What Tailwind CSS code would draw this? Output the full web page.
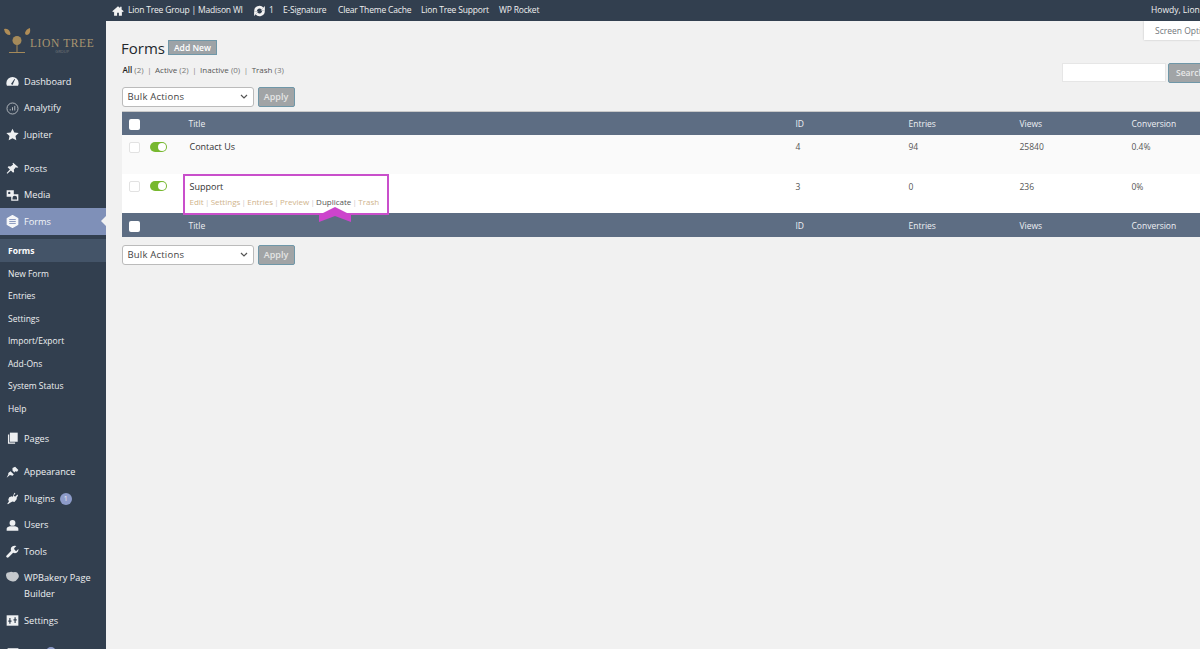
<!DOCTYPE html>
<html><head><meta charset="utf-8">
<script src="https://cdn.jsdelivr.net/npm/@tailwindcss/browser@4"></script>
</head>
<body class="m-0 overflow-hidden">
<div class="w-[1200px] h-[649px] overflow-hidden flex flex-col bg-[#f1f1f1] font-['Open_Sans',sans-serif] text-[#444]">
  <!-- top bar -->
  <header class="h-[21px] shrink-0 bg-[#323f4f] text-[#f0f0f0] text-[8.500px] tracking-[-0.180px] flex items-center pl-[112px] whitespace-nowrap">
    <svg class="w-[12px] h-[12px] mr-[4px]" viewBox="0 0 20 20" fill="#f2f2f2"><path d="M10 2 0.500 10.500 2 12l1.500-1.300V18h5v-5h3v5h5v-7.300L18 12l1.500-1.500L16 7.400V3h-2.500v2.200z"/></svg>
    <span class="w-[125px]">Lion Tree Group | Madison WI</span>
    <svg class="w-[13px] h-[12px] mr-[3px]" viewBox="0 0 20 20" fill="none" stroke="#f2f2f2" stroke-width="4.500"><path d="M3.500 11a6.500 6.500 0 0 1 11.500-5"/><path d="M16.500 9a6.500 6.500 0 0 1-11.500 5"/><path d="M19 1.500V9h-7z" fill="#f2f2f2" stroke="none"/><path d="M1 18.500V11h7z" fill="#f2f2f2" stroke="none"/></svg>
    <span class="w-[14px]">1</span>
    <span class="w-[55px]">E-Signature</span>
    <span class="w-[83px]">Clear Theme Cache</span>
    <span class="w-[78px]">Lion Tree Support</span>
    <span>WP Rocket</span>
    <span class="ml-auto w-[49px] tracking-normal">Howdy, Lion</span>
  </header>
  <div class="flex flex-1 min-h-0">
    <!-- sidebar -->
    <aside class="w-[106px] shrink-0 bg-[#323f4f] text-[#eef0f2] text-[9.200px] overflow-hidden">
      <div class="h-[47px] pl-[2px] pt-[6px] flex items-start">
        <svg class="w-[30px] h-[30px] shrink-0" viewBox="0 0 30 30"><path d="M2 2q4-1 6 3 1 2 0 3-5 0-6-6zM28 1q1 6-3 7-2 0-2-2 1-4 5-5z" fill="#b08d57"/><circle cx="15" cy="13.500" r="4.500" fill="#a58a5a"/><path d="M14.500 15h1v10h-1zM7 25h16v1H7z" fill="#a58a5a"/></svg>
        <div class="ml-[-2px] mt-[11px] text-center">
          <div class="font-['Liberation_Serif',serif] text-[11.500px] leading-[11px] tracking-[0.600px] text-[#a99570]">LION TREE</div>
          <div class="text-[4px] leading-[5px] text-[#76797c]">GROUP</div>
        </div>
      </div>
      <nav>
        <a class="h-[27px] flex items-center pl-[6px]"><svg class="w-[13px] h-[13px] mr-[5px]" viewBox="0 0 20 20" fill="#eef0f2"><path d="M10 3a9.500 9.500 0 0 0-9.500 9.500c0 1.500.4 2.800 1 4h17c.6-1.200 1-2.500 1-4A9.500 9.500 0 0 0 10 3zm-1 9 4-6 1 .6-3 6.400a1.500 1.500 0 1 1-2-1z"/></svg>Dashboard</a>
        <a class="h-[26px] flex items-center pl-[6px]"><svg class="w-[13px] h-[13px] mr-[5px]" viewBox="0 0 20 20" fill="none" stroke="#c5c9cd" stroke-width="1.300"><circle cx="10" cy="10" r="8.500"/><path d="M6.500 13v-2M10 13V8M13.500 13V6"/></svg>Analytify</a>
        <a class="h-[27px] flex items-center pl-[6px]"><svg class="w-[13px] h-[13px] mr-[5px]" viewBox="0 0 20 20" fill="#eef0f2"><path d="m10 1 2.800 6 6.700.8-4.900 4.500 1.300 6.600L10 15.600l-5.900 3.300 1.300-6.600L.5 7.800l6.700-.8z"/></svg>Jupiter</a>
        <a class="h-[27px] mt-[7px] flex items-center pl-[6px]"><svg class="w-[13px] h-[13px] mr-[5px]" viewBox="0 0 20 20" fill="#eef0f2"><path d="m11 1 8 7-2 1-2-1-3 4 .5 3-1.500 1.500-3.500-3.500L2 18l-1-1 5-5.500-3.500-3.500L4 6.500l3 .5 4-3-1-2z"/></svg>Posts</a>
        <a class="h-[26px] flex items-center pl-[6px]"><svg class="w-[13px] h-[13px] mr-[5px]" viewBox="0 0 20 20" fill="#eef0f2"><path d="M1 2h11v10H1zM8 8h11v10H8z"/><circle cx="5" cy="6" r="1.800" fill="#323f4f"/><path d="M10 14a2 2 0 0 1 7 0v2h-7z" fill="#323f4f"/></svg>Media</a>
        <a class="relative h-[27px] flex items-center pl-[6px] bg-[#7f90b8] text-[#f3f5f8]"><svg class="w-[13px] h-[13px] mr-[5px]" viewBox="0 0 20 20" fill="#f6f7f9"><path d="M10 1 18 5.500v9L10 19l-8-4.500v-9z" stroke="#f6f7f9" stroke-width="2" stroke-linejoin="round"/><path d="M5 7h10M5 10h10M5 13h10" stroke="#7f90b8" stroke-width="1.400"/></svg>Forms<span class="absolute right-0 top-[8px] w-0 h-0 border-y-[5px] border-y-transparent border-r-[5px] border-r-[#f1f1f1]"></span></a>
        <div class="h-[187px] pt-[4px] text-[8.500px]">
          <a class="h-[23px] mb-[1px] flex items-center pl-[8px] pt-[1px] font-bold bg-[#445468] text-white">Forms</a>
          <a class="h-[22px] flex items-center pl-[8px]">New Form</a>
          <a class="h-[23px] flex items-center pl-[8px]">Entries</a>
          <a class="h-[22px] flex items-center pl-[8px]">Settings</a>
          <a class="h-[23px] flex items-center pl-[8px]">Import/Export</a>
          <a class="h-[22px] flex items-center pl-[8px]">Add-Ons</a>
          <a class="h-[23px] flex items-center pl-[8px]">System Status</a>
          <a class="h-[22px] flex items-center pl-[8px]">Help</a>
        </div>
        <a class="h-[27px] mt-[3px] flex items-center pl-[6px]"><svg class="w-[13px] h-[13px] mr-[5px]" viewBox="0 0 20 20" fill="#eef0f2"><path d="M6 1h12v14H6z"/><path d="M3 4h2v12h9v2H3z"/></svg>Pages</a>
        <a class="h-[26px] mt-[7px] flex items-center pl-[6px]"><svg class="w-[13px] h-[13px] mr-[5px]" viewBox="0 0 20 20" fill="#eef0f2"><path d="M10 3 14 1l5 5-2 3-3-1-1 2-3-3zM7 8l5 5-2 2-4-1-5 4 3-6-1-1z"/></svg>Appearance</a>
        <a class="h-[27px] flex items-center pl-[6px]"><svg class="w-[13px] h-[13px] mr-[5px]" viewBox="0 0 20 20" fill="#eef0f2"><path d="m13 1 1.500 1-3 4 3 1 3-3 1 1.500L16 9.500l1 1-4 5-3-1-3 1.500L3 19l-1-1 2.500-3.500-1-3 1.500-3.500 4-1.500 1 1z"/></svg><span>Plugins</span><span class="ml-[5px] w-[12px] h-[12px] rounded-full bg-[#8d9bc9] text-[7px] leading-[12px] text-center">1</span></a>
        <a class="h-[26px] flex items-center pl-[6px]"><svg class="w-[13px] h-[13px] mr-[5px]" viewBox="0 0 20 20" fill="#eef0f2"><circle cx="10" cy="6" r="4.500"/><path d="M1 18v-3q0-3 5-4h8q5 1 5 4v3z"/></svg>Users</a>
        <a class="h-[27px] flex items-center pl-[6px]"><svg class="w-[13px] h-[13px] mr-[5px]" viewBox="0 0 20 20" fill="#eef0f2"><path d="M13 1a5.500 5.500 0 0 0-5 8L1 16a2 2 0 0 0 3 3l7-7a5.500 5.500 0 0 0 8-6l-3.500 3.500L13 7l-.5-2L16 1.500A5.500 5.500 0 0 0 13 1z"/></svg>Tools</a>
        <a class="h-[42px] flex items-start pl-[6px] pt-[5px] leading-[16px]"><svg class="w-[13px] h-[13px] shrink-0 mr-[5px] mt-[1px]" viewBox="0 0 20 20" fill="#c5c9cd"><path d="M0 7q0-5 5-5 3-2 6 0 6-2 8 3 2 4-1 7-3 5-8 4-9-1-10-9z"/></svg><span class="w-[76px]">WPBakery Page Builder</span></a>
        <a class="h-[27px] flex items-center pl-[6px]"><svg class="w-[13px] h-[13px] mr-[5px]" viewBox="0 0 20 20"><path d="M1 2h18v16H1z" fill="#eef0f2"/><path d="M6 6v9M3.500 11h5M14 5v9M11.500 9h5" stroke="#323f4f" stroke-width="1.800"/></svg>Settings</a>
        <div class="h-[20px] mt-[13px] flex pl-[7px] gap-[27px]"><svg class="w-[12px] h-[12px]" viewBox="0 0 20 20" fill="#eef0f2"><path d="M1 2h18v16H1z"/></svg><i class="block w-[10px] h-[10px] rounded-full bg-[#8d9bc9]"></i></div>
      </nav>
    </aside>
    <!-- content -->
    <main class="relative flex-1 min-w-0 overflow-hidden pl-[15.500px]">
      <div class="absolute right-0 top-0 w-[56px] h-[19px] bg-white shadow-[0_0_2px_rgba(0,0,0,0.2)] text-[8.500px] leading-[19px] pl-[11px] text-[#72777c] whitespace-nowrap overflow-hidden">Screen Options</div>
      <div class="h-[39px] pt-[14px] flex items-center -ml-[0.500px]">
        <h1 class="text-[15px] font-normal text-[#23282d] leading-[22px]">Forms</h1>
        <span class="ml-[3px] w-[49px] h-[15px] bg-[#9da3a7] border border-[#6f97a8] text-white font-semibold text-[8.500px] leading-[13px] text-center">Add New</span>
      </div>
      <div class="mt-[3px] ml-[1px] h-[14px] flex items-center text-[8px] text-[#555] whitespace-nowrap">
        <b class="font-semibold text-[#222]">All</b>&nbsp;<span class="text-[#777]">(2)</span><span class="mx-[3.500px] text-[#888]">|</span>Active&nbsp;<span class="text-[#777]">(2)</span><span class="mx-[3.500px] text-[#888]">|</span>Inactive&nbsp;<span class="text-[#777]">(0)</span><span class="mx-[3.500px] text-[#888]">|</span>Trash&nbsp;<span class="text-[#777]">(3)</span>
      </div>
      <div class="absolute left-[956px] top-[42px] flex gap-[2px]">
        <div class="w-[104px] h-[19px] bg-white border border-[#e6e6e6]"></div>
        <div class="w-[40px] h-[20px] bg-[#a1a4a6] border border-[#6f97a8] rounded-[2px] text-[8.500px] font-semibold text-[#e8e8e8] leading-[18px] pl-[7px] overflow-hidden">Search</div>
      </div>
      <div class="mt-[10px] flex items-center gap-[4px]">
        <div class="w-[132px] h-[20px] bg-white border border-[#bbb] rounded-[3px] flex items-center justify-between pl-[5px] pr-[5px] text-[9.500px] text-[#444] tracking-[0.200px]">Bulk Actions<svg class="w-[8px] h-[6px]" viewBox="0 0 8 6" fill="none" stroke="#555" stroke-width="1.200"><path d="m1 1 3 3 3-3"/></svg></div>
        <div class="w-[37px] h-[20px] bg-[#a1a4a6] border border-[#6f97a8] rounded-[2px] text-[9px] font-semibold text-[#e4e4e4] text-center leading-[18px]">Apply</div>
      </div>
      <!-- table -->
      <div class="mt-[4px] w-[1100px] relative text-[8.500px]">
        <div class="h-[24px] pt-[1px] bg-[#5d6d83] text-[#eef0f3] grid grid-cols-[68px_607px_112px_111px_112px_1fr] items-center border-t border-[#c9c9c9]">
          <span class="pl-[7px]"><i class="block w-[11px] h-[11px] bg-white rounded-[2px]"></i></span><span class="-ml-[1px]">Title</span><span class="-ml-[1px]">ID</span><span>Entries</span><span>Views</span><span>Conversion</span>
        </div>
        <div class="h-[39px] bg-[#fafafa] grid grid-cols-[68px_607px_112px_111px_112px_1fr] pt-[6px] text-[#555]">
          <span class="pl-[7px] flex items-start"><i class="block mt-[1px] w-[11px] h-[11px] bg-white border border-[#e2e2e2] rounded-[2px]"></i><i class="relative block ml-[10px] mt-[1px] w-[17px] h-[10px] rounded-full bg-[#77b82f]"><i class="absolute right-[1px] top-[1px] w-[8px] h-[8px] rounded-full bg-white"></i></i></span>
          <span class="text-[9px] font-medium text-[#333] leading-[12px]">Contact Us</span><span class="-ml-[1px]">4</span><span>94</span><span>25840</span><span>0.4%</span>
        </div>
        <div class="h-[39px] bg-white grid grid-cols-[68px_607px_112px_111px_112px_1fr] pt-[7px] text-[#555]">
          <span class="pl-[7px] flex items-start"><i class="block w-[11px] h-[11px] bg-white border border-[#e2e2e2] rounded-[2px]"></i><i class="relative block ml-[10px] w-[17px] h-[10px] rounded-full bg-[#77b82f]"><i class="absolute right-[1px] top-[1px] w-[8px] h-[8px] rounded-full bg-white"></i></i></span>
          <span><span class="block text-[9px] font-medium text-[#333] leading-[12px]">Support</span><span class="flex gap-[1.250px] mt-[3px] text-[8px] leading-[12px] whitespace-nowrap text-[#d0b48c]"><span>Edit</span><span class="text-[#ccc]">|</span><span>Settings</span><span class="text-[#ccc]">|</span><span>Entries</span><span class="text-[#ccc]">|</span><span>Preview</span><span class="text-[#ccc]">|</span><span class="text-[#555]">Duplicate</span><span class="text-[#ccc]">|</span><span>Trash</span></span></span><span class="-ml-[1px]">3</span><span>0</span><span>236</span><span>0%</span>
        </div>
        <div class="h-[24px] pt-[2px] bg-[#5d6d83] text-[#eef0f3] grid grid-cols-[68px_607px_112px_111px_112px_1fr] items-center">
          <span class="pl-[7px]"><i class="block w-[11px] h-[11px] bg-white rounded-[2px]"></i></span><span class="-ml-[1px]">Title</span><span class="-ml-[1px]">ID</span><span>Entries</span><span>Views</span><span>Conversion</span>
        </div>
        <!-- annotation -->
        <div class="absolute left-[61px] top-[63px] w-[206px] h-[41px] border-2 border-[#c94fcb]"></div>
        <svg class="absolute left-[197px] top-[96px] w-[32px] h-[15px]" viewBox="0 0 32 15" fill="#cc44cc"><path d="M16 0 32 8v7L16 9 0 15V8z"/></svg>
      </div>
      <div class="mt-[8px] flex items-center gap-[4px]">
        <div class="w-[132px] h-[20px] bg-white border border-[#bbb] rounded-[3px] flex items-center justify-between pl-[5px] pr-[5px] text-[9.500px] text-[#444] tracking-[0.200px]">Bulk Actions<svg class="w-[8px] h-[6px]" viewBox="0 0 8 6" fill="none" stroke="#555" stroke-width="1.200"><path d="m1 1 3 3 3-3"/></svg></div>
        <div class="w-[37px] h-[20px] bg-[#a1a4a6] border border-[#6f97a8] rounded-[2px] text-[9px] font-semibold text-[#e4e4e4] text-center leading-[18px]">Apply</div>
      </div>
    </main>
  </div>
</div>
</body></html>
